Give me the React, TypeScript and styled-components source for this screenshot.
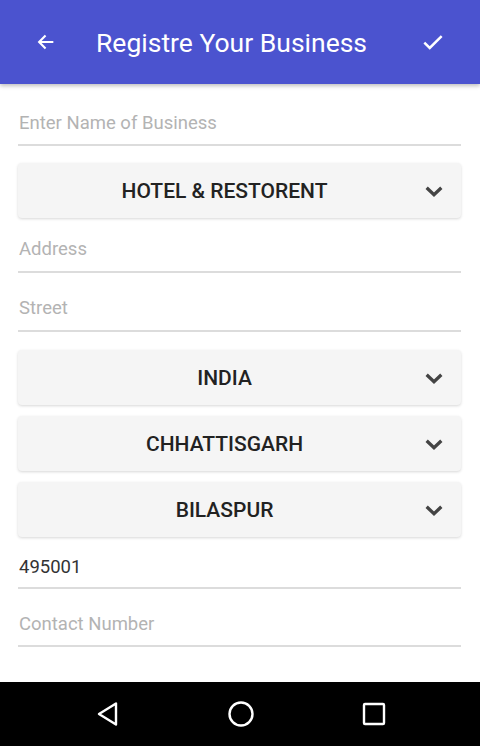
import styled, { createGlobalStyle } from "styled-components";

const GlobalStyle = createGlobalStyle`
  html, body {
    margin: 0;
    padding: 0;
    background: #ffffff;
    font-family: Roboto, "Noto Sans", sans-serif;
  }
  * { box-sizing: border-box; }
`;

const Screen = styled.div`
  width: 480px;
  height: 746px;
  display: flex;
  flex-direction: column;
  background: #ffffff;
  overflow: hidden;
`;

const AppBar = styled.header`
  height: 84px;
  flex-shrink: 0;
  background: #4b53cf;
  display: flex;
  align-items: center;
  padding: 0 33px 0 32px;
  box-shadow: 0 2px 4px rgba(0, 0, 0, 0.25);
  position: relative;
  z-index: 1;
`;

const IconButton = styled.div`
  width: 28px;
  height: 28px;
  display: flex;
  align-items: center;
  justify-content: center;
  color: #ffffff;
`;

const Title = styled.h1`
  flex: 1;
  margin: 0 0 0 36px;
  font-size: 26.5px;
  font-weight: 400;
  color: #ffffff;
`;

const Form = styled.main`
  flex: 1;
  display: flex;
  flex-direction: column;
  padding: 18px 19px 0 18px;
`;

const Field = styled.div<{ $top: number; $height: number }>`
  margin-top: ${(p) => p.$top}px;
  height: ${(p) => p.$height}px;
  border-bottom: 2px solid #dcdcdc;
  display: flex;
  align-items: center;
  font-size: 18.5px;
  padding-left: 1px;
`;

const FieldText = styled.span<{ $filled?: boolean }>`
  color: ${(p) => (p.$filled ? "#333333" : "#b3b3b3")};
`;

const Select = styled.div<{ $top: number }>`
  margin-top: ${(p) => p.$top}px;
  height: 55px;
  background: #f5f5f5;
  border-radius: 4px;
  box-shadow: 0 1px 3px rgba(0, 0, 0, 0.16);
  display: flex;
  align-items: center;
  padding: 0 16px 0 0;
`;

const SelectLabel = styled.span`
  flex: 1;
  text-align: center;
  font-size: 21px;
  font-weight: 500;
  color: #222222;
  padding-left: 8px;
`;

const NavBar = styled.nav`
  height: 64px;
  flex-shrink: 0;
  background: #000000;
  display: grid;
  grid-template-columns: repeat(3, 1fr);
  align-items: center;
  justify-items: center;
  padding: 0 40px 0 41px;
`;

const Chevron = () => (
  <svg width="22" height="22" viewBox="0 0 24 24">
    <path d="M4 8.5 12 16 20 8.5" fill="none" stroke="#444" strokeWidth="3.6" />
  </svg>
);

type SelectBoxProps = { label: string; top: number };

const SelectBox = ({ label, top }: SelectBoxProps) => (
  <Select $top={top}>
    <SelectLabel>{label}</SelectLabel>
    <Chevron />
  </Select>
);

export default function App() {
  return (
    <Screen>
      <GlobalStyle />
      <AppBar>
        <IconButton>
          <svg width="22" height="22" viewBox="0 0 24 24">
            <path d="M20 12H5M11.5 5 4.5 12l7 7" fill="none" stroke="#fff" strokeWidth="2.3" />
          </svg>
        </IconButton>
        <Title>Registre Your Business</Title>
        <IconButton>
          <svg width="26" height="26" viewBox="0 0 24 24">
            <path d="M4 12.5l5 5L20 6.5" fill="none" stroke="#fff" strokeWidth="2.3" />
          </svg>
        </IconButton>
      </AppBar>
      <Form>
        <Field $top={0} $height={44}>
          <FieldText>Enter Name of Business</FieldText>
        </Field>
        <SelectBox label="HOTEL & RESTORENT" top={17} />
        <Field $top={8} $height={47}>
          <FieldText>Address</FieldText>
        </Field>
        <Field $top={12} $height={47}>
          <FieldText>Street</FieldText>
        </Field>
        <SelectBox label="INDIA" top={18} />
        <SelectBox label="CHHATTISGARH" top={11} />
        <SelectBox label="BILASPUR" top={11} />
        <Field $top={9} $height={43}>
          <FieldText $filled>495001</FieldText>
        </Field>
        <Field $top={13} $height={45}>
          <FieldText>Contact Number</FieldText>
        </Field>
      </Form>
      <NavBar>
        <svg width="26" height="26" viewBox="0 0 26 26">
          <path d="M21 2.5v21L4 13z" fill="none" stroke="#fff" strokeWidth="2.4" strokeLinejoin="round" />
        </svg>
        <svg width="28" height="28" viewBox="0 0 28 28">
          <circle cx="14" cy="14" r="11.5" fill="none" stroke="#fff" strokeWidth="2.4" />
        </svg>
        <svg width="24" height="24" viewBox="0 0 24 24">
          <rect x="2" y="2" width="20" height="20" rx="1" fill="none" stroke="#fff" strokeWidth="2.4" />
        </svg>
      </NavBar>
    </Screen>
  );
}
